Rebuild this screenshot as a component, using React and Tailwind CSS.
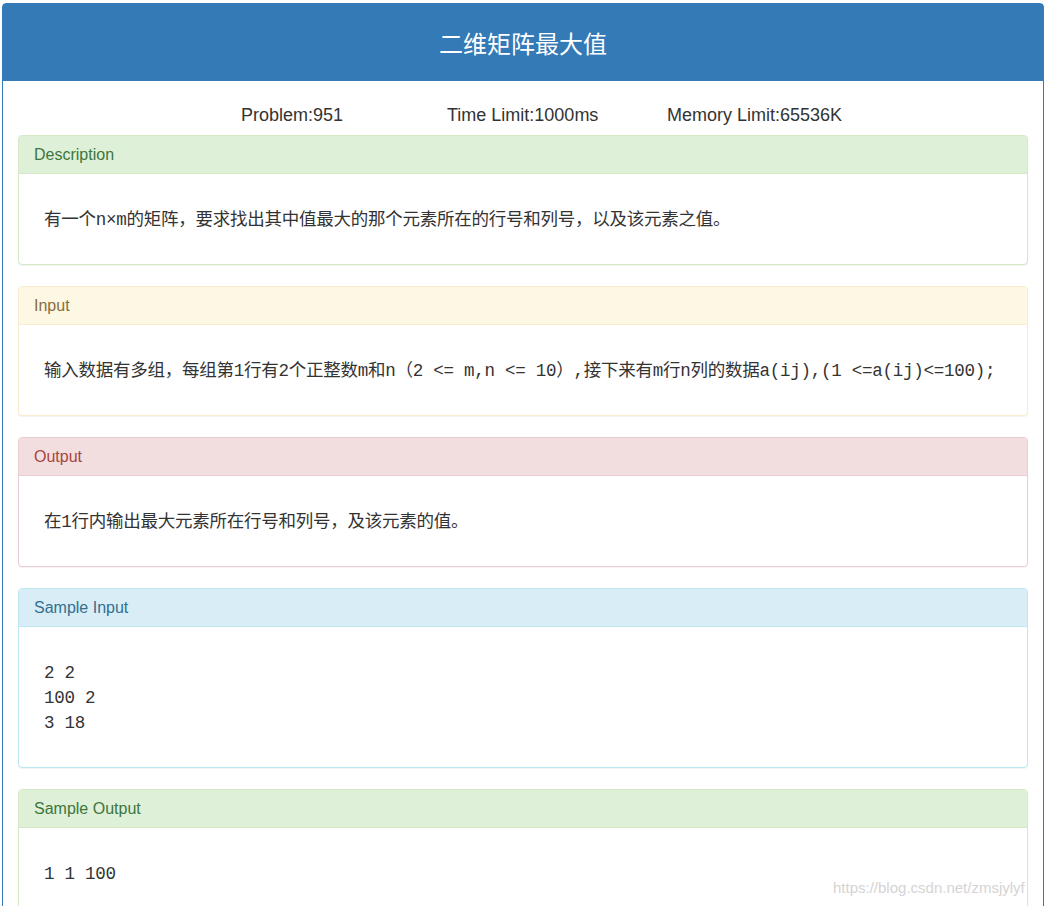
import React from "react";

const tones = {
  success: {
    box: "border-[#d6e9c6]",
    head: "bg-[#dff0d8] text-[#3c763d] border-[#d6e9c6]",
  },
  warning: {
    box: "border-[#faebcc]",
    head: "bg-[#fcf8e3] text-[#8a6d3b] border-[#faebcc]",
  },
  danger: {
    box: "border-[#ebccd1]",
    head: "bg-[#f2dede] text-[#a94442] border-[#ebccd1]",
  },
  info: {
    box: "border-[#bce8f1]",
    head: "bg-[#d9edf7] text-[#31708f] border-[#bce8f1]",
  },
};

const bodyFont = {
  fontFamily: '"Liberation Mono", "Noto Sans CJK SC", monospace',
};

function Panel({ tone, title, lines }) {
  const t = tones[tone];
  const multi = lines.length > 1;
  return (
    <div
      className={`border ${t.box} rounded-[4px] bg-white shadow-[0_1px_1px_rgba(0,0,0,0.05)] overflow-hidden`}
    >
      <div
        className={`h-[38px] border-b ${t.head} px-[15px] flex items-center text-[16px] font-['Liberation_Sans',sans-serif]`}
      >
        {title}
      </div>
      <div
        className={`pl-[25px] pr-[15px] pt-[34px] ${multi ? "pb-[31px]" : "pb-[32px]"} text-[17.5px] tracking-[-0.25px] text-[#333] whitespace-pre`}
        style={bodyFont}
      >
        {lines.map((l, i) => (
          <div key={i} className={multi ? "leading-[25px]" : "leading-[24px]"}>
            {l}
          </div>
        ))}
      </div>
    </div>
  );
}

export default function App() {
  return (
    <div className="bg-white min-h-[906px] relative overflow-hidden">
      <div className="pt-[3px] pl-[2px] w-[1044px]">
        <div className="border border-[#337ab7] rounded-t-[4px] min-h-[903px]">
          <div className="h-[77px] bg-[#337ab7] flex items-center justify-center text-white text-[24px] font-['Noto_Sans_CJK_SC',sans-serif]">
            二维矩阵最大值
          </div>
          <div className="px-[15px]">
            <div className="pt-[21px] h-[54px] flex text-[18px] text-[#333] leading-[26px] font-['Liberation_Sans',sans-serif]">
              <span className="ml-[223px] w-[206px]">Problem:951</span>
              <span className="w-[220px]">Time Limit:1000ms</span>
              <span>Memory Limit:65536K</span>
            </div>
            <div className="flex flex-col gap-[21px]">
              <Panel
                tone="success"
                title="Description"
                lines={["有一个n×m的矩阵，要求找出其中值最大的那个元素所在的行号和列号，以及该元素之值。"]}
              />
              <Panel
                tone="warning"
                title="Input"
                lines={[
                  "输入数据有多组，每组第1行有2个正整数m和n（2 <= m,n <= 10）,接下来有m行n列的数据a(ij),(1 <=a(ij)<=100);",
                ]}
              />
              <Panel
                tone="danger"
                title="Output"
                lines={["在1行内输出最大元素所在行号和列号，及该元素的值。"]}
              />
              <Panel tone="info" title="Sample Input" lines={["2 2", "100 2", "3 18"]} />
              <Panel tone="success" title="Sample Output" lines={["1 1 100"]} />
            </div>
          </div>
        </div>
      </div>
      <div className="absolute left-[833px] top-[877px] text-[15px] text-[#d4d4d4] font-['Liberation_Sans',sans-serif] [text-shadow:0_0_2px_#fff]">
        https://blog.csdn.net/zmsjylyf
      </div>
    </div>
  );
}
